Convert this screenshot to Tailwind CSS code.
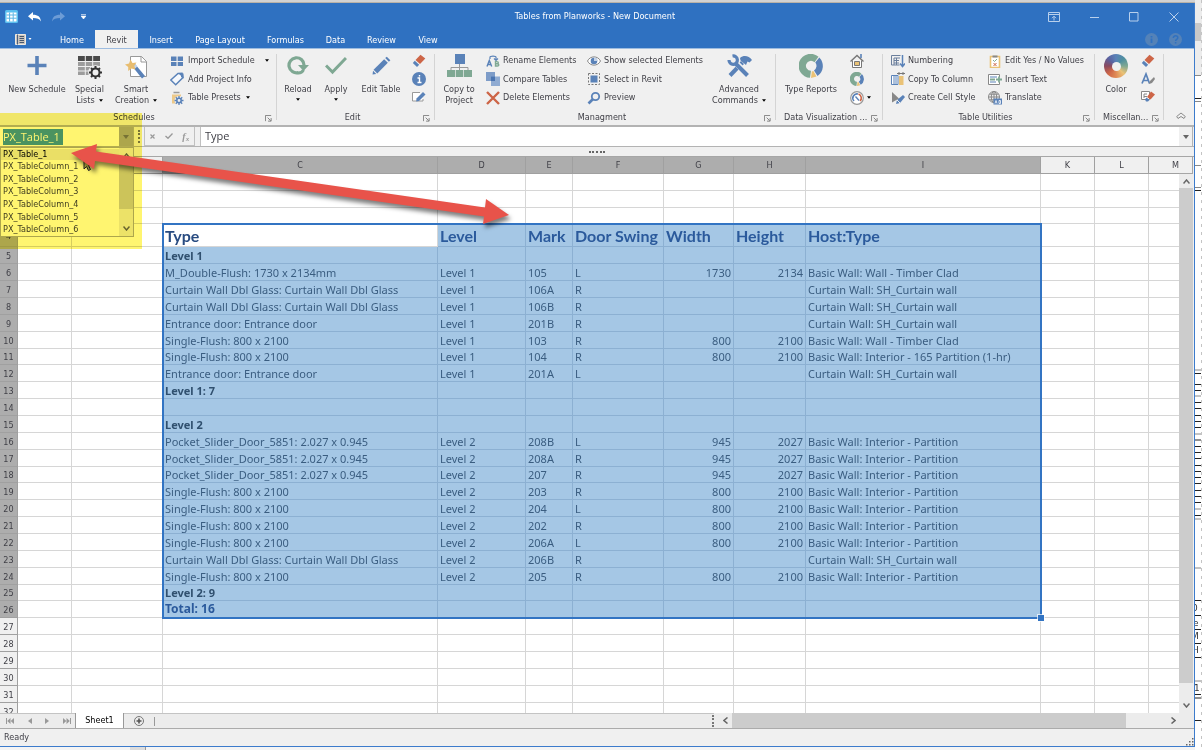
<!DOCTYPE html>
<html lang="en">
<head>
  <meta charset="utf-8">
  <meta name="viewport" content="width=device-width, initial-scale=1">
  <title>Tables from Planworks - New Document</title>
  <script src="https://cdn.jsdelivr.net/npm/@tailwindcss/browser@4"></script>
</head>
<body class="h-screen overflow-hidden bg-white font-['DejaVu_Sans_Condensed','DejaVu_Sans',sans-serif] text-[9px] leading-[11px] text-[#3f3f46]">

<!-- shared icons -->
<svg class="hidden">
  <symbol id="launcher" viewBox="0 0 8 8"><path d="M.5 7V.5H7" fill="none" stroke="#777"/><path d="M3 3l3.5 3.5M7 3.5V7H3.5" fill="none" stroke="#777"/></symbol>
  <symbol id="down" viewBox="0 0 6 4"><path d="M0 0h6L3 4z" fill="currentColor"/></symbol>
  <symbol id="eraser" viewBox="0 0 14 14"><path d="M8.500 .8 13.300 4.500 8 10 3.500 6z" fill="#cd6547"/><path d="M2.800 6.800 7.200 10.700 5 13 .8 9z" fill="#5a82b8"/></symbol>
  <symbol id="donut" viewBox="0 0 24 24">
    <path d="M11 23.800A12 12 0 1 1 19.500 2.800L15.500 8.300A5 5 0 1 0 12 16.800z" fill="#7fa893"/>
    <path d="M20.300 3.500A12 12 0 0 1 18.500 22L15 16.500A5.500 5.500 0 0 0 16.300 8.500z" fill="#5a82b8"/>
    <path d="M12.800 17.500 14.400 17 17.500 22.500 12 24z" fill="#eac276"/>
  </symbol>
  <symbol id="pencil" viewBox="0 0 18 18"><path d="M1.500 13 11.500 3 15 6.500 5 16.500z" fill="#5a82b8"/><path d="M12.500 2 14 .7 17.400 4 16 5.500z" fill="#5a82b8"/><path d="M1 14l3 3-3.500.6z" fill="#5a82b8"/></symbol>
</svg>

<div class="flex h-full">
  <div class="flex min-w-0 flex-1 flex-col">
    <div class="h-[3px] shrink-0 border-b border-[#b9b2a8] bg-[#d2d2d2]"></div>

    <main class="relative flex min-h-0 flex-1 flex-col border-r border-b border-[#3c7bcc] bg-[#f0f0f0]">

      <!-- title bar -->
      <header class="bg-[#2f71c1] text-white">
        <div class="relative flex h-[27px] items-center">
          <svg class="ml-[5px] size-[13px]" viewBox="0 0 13 13"><rect width="13" height="13" rx="1.500" fill="#5bc0f0"/><path d="M1.500 2.500h10v9h-10z" fill="#fff"/><path d="M1.500 5h10M1.500 8.200h10M4.600 2.500v9M8.200 2.500v9" stroke="#5bb4e4"/></svg>
          <button class="ml-[10px]" aria-label="Undo"><svg class="h-[10px] w-[13px]" viewBox="0 0 13 10"><path d="M0 4.200 5 0v2.700c5 0 7.500 2 8 6.800-1.500-2.700-4-3.500-8-3.500v2.500z" fill="#fff"/></svg></button>
          <button class="ml-[11px]" aria-label="Redo"><svg class="h-[10px] w-[13px]" viewBox="0 0 13 10"><path d="M13 4.200 8 0v2.700C3 2.700.5 4.700 0 9.500 1.500 6.800 4 6 8 6v2.500z" fill="#6d9cd6"/></svg></button>
          <button class="ml-[16px]" aria-label="Customize"><svg class="h-[5px] w-[5px]" viewBox="0 0 5 5"><path d="M0 .5h5M0 2h5L2.500 5z" stroke="#fff" stroke-width=".6" fill="#fff"/></svg></button>
          <h1 class="pointer-events-none absolute inset-x-0 pr-1 text-center">Tables from Planworks - New Document</h1>
          <div class="mr-[15px] ml-auto flex items-center gap-[30px]">
            <button aria-label="Ribbon options"><svg class="h-[10px] w-[12px]" viewBox="0 0 12 10"><path d="M.5.5h11v9H.5zM.5 2.500h11M6 8.500v-4M4 6.200l2-2 2 2" fill="none" stroke="#b9d0ec"/></svg></button>
            <button aria-label="Minimize"><svg class="h-[10px] w-[9px]" viewBox="0 0 9 10"><path d="M0 5.500h9" stroke="#b9d0ec"/></svg></button>
            <button aria-label="Maximize"><svg class="size-[10px]" viewBox="0 0 10 10"><path d="M.5.500h8.500v8.500H.500z" fill="none" stroke="#b9d0ec"/></svg></button>
            <button aria-label="Close"><svg class="size-[10px]" viewBox="0 0 10 10"><path d="M.5.500l9 9M9.500.500l-9 9" stroke="#b9d0ec"/></svg></button>
          </div>
        </div>
        <nav class="flex h-[18px] items-stretch">
          <button class="ml-[15px] flex w-[34px] items-center gap-[2px]" aria-label="File">
            <svg class="h-[11px] w-[11px]" viewBox="0 0 11 11"><path d="M.5.5h10v10H.5z" fill="#c9c4bd" stroke="#efe9e0"/><path d="M2.500.5v10" stroke="#4a5f80"/><path d="M4.500 2.500H9M4.500 4.500H9M4.500 6.500H9M4.500 8.500H9" stroke="#46566e"/></svg>
            <svg class="h-[2px] w-[4px]"><use href="#down"/></svg>
          </button>
          <button class="w-[46px] pt-[2px]">Home</button>
          <button class="w-[43px] bg-[#f0f0f0] pt-[2px] text-[#3f3f46]">Revit</button>
          <button class="w-[46px] pt-[2px]">Insert</button>
          <button class="w-[72px] pt-[2px]">Page Layout</button>
          <button class="w-[59px] pt-[2px]">Formulas</button>
          <button class="w-[41px] pt-[2px]">Data</button>
          <button class="w-[51px] pt-[2px]">Review</button>
          <button class="w-[42px] pt-[2px]">View</button>
          <div class="mr-[12px] ml-auto flex items-center gap-[11px]">
            <svg class="size-[13px]" viewBox="0 0 13 13"><circle cx="6.500" cy="6.500" r="6.500" fill="#5482b8"/><path d="M6.500 5.500v4.500M6.500 3v1.500" stroke="#2f71c1" stroke-width="1.800"/></svg>
            <svg class="size-[13px]" viewBox="0 0 13 13"><circle cx="6.500" cy="6.500" r="6.500" fill="#5482b8"/><path d="M4.300 5c0-3 4.500-2.700 4.500-.2 0 1.500-2.200 1.500-2.200 3.200M6.600 9v1.500" fill="none" stroke="#2f71c1" stroke-width="1.500"/></svg>
          </div>
        </nav>
      </header>

      <!-- ribbon -->
      <section class="flex h-[77px] shrink-0 border-t border-[#9dbce0]">

        <div class="flex w-[276px] shrink-0 flex-col">
          <div class="flex h-[63px] pt-[2px]">
            <button class="ml-1 flex w-[66px] flex-col items-center">
              <svg class="mb-[4px] h-[29px] w-[20px]" viewBox="0 0 20 29"><path d="M10 5v19M.5 14.500h19" stroke="#5a82b8" stroke-width="3.600"/></svg>New Schedule
            </button>
            <button class="flex w-[39px] flex-col items-center">
              <svg class="mb-[4px] h-[29px] w-[25px]" viewBox="0 0 25 29">
                <path d="M1 5h22v5H1z" fill="#4a4a4a"/><path d="M1 11h22v13H1z" fill="#9c9c9c"/><path d="M1 15.500h22M1 20h22M8.300 5v20M15.700 5v20" stroke="#f0f0f0"/>
                <circle cx="18.500" cy="21.500" r="7.300" fill="#f0f0f0"/><circle cx="18.500" cy="21.500" r="4" fill="none" stroke="#333" stroke-width="2"/>
                <path d="M18.500 15v2.500M18.500 25.500V28M12 21.500h2.500M22.500 21.500H25M14 17l1.700 1.700M21.300 24.300 23 26M23 17l-1.700 1.700M15.700 24.300 14 26" stroke="#333" stroke-width="2"/>
              </svg>Special<span class="flex items-center gap-[4px]">Lists <svg class="h-[3px] w-[4px] text-black"><use href="#down"/></svg></span>
            </button>
            <button class="flex w-[54px] flex-col items-center">
              <svg class="mb-[4px] h-[29px] w-[23px]" viewBox="0 0 23 29">
                <path d="M5.500 5.500h11l5 5v15h-16z" fill="#fff" stroke="#999"/><path d="M16 5.500V11h5.500" fill="none" stroke="#999"/>
                <path d="M7 15l3-2 10 12-3 2.500z" fill="#5a82b8"/><path d="M7.500 15.500l2.800-2 2 2.300-2.800 2z" fill="#c8d6e8"/>
                <path d="M5.500 8.500 7.500 12l4-.5-2.300 3.300L10.500 18.500 6.500 17.500 3.200 20V16L0 13.500l4-1z" fill="#e8bd70"/>
              </svg>Smart<span class="flex items-center gap-[4px]">Creation <svg class="h-[3px] w-[4px] text-black"><use href="#down"/></svg></span>
            </button>
            <div class="ml-[7px] flex flex-col">
              <button class="flex h-[19px] items-center gap-1"><svg class="size-[14px]" viewBox="0 0 14 14"><path d="M1 2.500h5.500V7H1zM7.700 2.500H13V7H7.700zM1 8h5.500v4H1zM7.700 8H13v4H7.700z" fill="#5a82b8"/></svg>Import Schedule <svg class="ml-[6px] h-[3px] w-[4px] text-black"><use href="#down"/></svg></button>
              <button class="flex h-[18px] items-center gap-1"><svg class="size-[14px]" viewBox="0 0 14 14"><path d="M8 1.500 12 1.200 13 5.500 5.700 12.800.800 8z" fill="#f5f8fc" stroke="#5a82b8" stroke-width="1.500"/><path d="M9 1.500h4.500v5L11 5z" fill="#5a82b8"/><circle cx="10" cy="4.200" r="1" fill="#fff"/></svg>Add Project Info</button>
              <button class="flex h-[19px] items-center gap-1"><svg class="size-[14px]" viewBox="0 0 14 14"><path d="M3.500 1.500h6" stroke="#999" stroke-width="1.500"/><path d="M2 3.500h9v9H2z" fill="#ecc98a"/><circle cx="9" cy="9.500" r="4.500" fill="#f0f0f0"/><circle cx="9" cy="9.500" r="2.200" fill="none" stroke="#5a82b8" stroke-width="1.600"/><path d="M9 5v2M9 12v2M4.500 9.500h2M11.500 9.500h2M5.800 6.300l1.400 1.400M10.800 11.300l1.400 1.400M12.200 6.300l-1.400 1.400M7.200 11.300l-1.400 1.400" stroke="#5a82b8" stroke-width="1.300"/></svg>Table Presets <svg class="ml-[1px] h-[3px] w-[4px] text-black"><use href="#down"/></svg></button>
            </div>
          </div>
          <div class="relative pr-[8px] text-center">Schedules<button class="absolute top-[3px] right-[4px]" aria-label="Schedules options"><svg class="size-[7px]"><use href="#launcher"/></svg></button></div>
        </div>
        <div class="my-[5px] w-px shrink-0 bg-[#d4d4d4]"></div>

        <div class="flex w-[157px] shrink-0 flex-col">
          <div class="flex h-[63px] pt-[2px]">
            <button class="ml-[2px] flex w-[38px] flex-col items-center">
              <svg class="mb-[4px] h-[29px] w-[22px]" viewBox="0 0 22 29"><path d="M11.500 21.500A7.500 7.500 0 1 1 17 14" fill="none" stroke="#7fa893" stroke-width="3.200"/><path d="M10 21.800c3 .4 5.500-1 6.500-3" fill="none" stroke="#7fa893" stroke-width="3"/><path d="M11 14h11l-5.500 6z" fill="#7fa893"/></svg>Reload<svg class="mt-[3px] h-[3px] w-[4px] text-black"><use href="#down"/></svg>
            </button>
            <button class="flex w-[38px] flex-col items-center">
              <svg class="mb-[4px] h-[29px] w-[22px]" viewBox="0 0 22 29"><path d="M1 14.500 7.500 21 21 7" fill="none" stroke="#7fa893" stroke-width="3"/></svg>Apply<svg class="mt-[3px] h-[3px] w-[4px] text-black"><use href="#down"/></svg>
            </button>
            <button class="flex w-[52px] flex-col items-center">
              <svg class="mt-[5px] mb-[9px] h-[19px] w-[19px]"><use href="#pencil"/></svg>Edit Table
            </button>
            <div class="ml-[5px] flex flex-col">
              <button class="flex h-[19px] items-center" aria-label="Clear"><svg class="size-[14px]"><use href="#eraser"/></svg></button>
              <button class="flex h-[18px] items-center" aria-label="Info"><svg class="size-[14px]" viewBox="0 0 14 14"><circle cx="7" cy="7" r="7" fill="#5a82b8"/><path d="M5.500 6H7.500v4.500M5.500 10.500h4M7.500 3v1.600" fill="none" stroke="#fff" stroke-width="1.400"/></svg></button>
              <button class="flex h-[18px] items-center" aria-label="Edit"><svg class="size-[14px]" viewBox="0 0 14 14"><path d="M8 2.500H.500v8.500H11V9" fill="#fff" stroke="#999"/><path d="M4.500 8.500 11 2l2.500 2.500-6.500 6.500-2.800.5z" fill="#5a82b8"/></svg></button>
            </div>
          </div>
          <div class="relative pr-[6px] text-center">Edit<button class="absolute top-[3px] right-[4px]" aria-label="Edit options"><svg class="size-[7px]"><use href="#launcher"/></svg></button></div>
        </div>
        <div class="my-[5px] w-px shrink-0 bg-[#d4d4d4]"></div>

        <div class="flex w-[340px] shrink-0 flex-col">
          <div class="flex h-[63px] pt-[2px]">
            <button class="ml-[1px] flex w-[46px] flex-col items-center">
              <svg class="mb-[4px] h-[29px] w-[25px]" viewBox="0 0 25 29"><path d="M12.500 13v4M4 20v-3.500h17V20M12.500 16v4" fill="none" stroke="#999"/><path d="M8 3h10v10H8z" fill="#5a82b8"/><path d="M0 19h8v7H0zM8.700 19h7.600v7H8.700zM17 19h8v7h-8z" fill="#7fa893"/></svg>Copy to<span>Project</span>
            </button>
            <div class="ml-[4px] flex w-[101px] flex-col">
              <button class="flex h-[19px] items-center gap-[3px] whitespace-nowrap"><svg class="size-[14px]" viewBox="0 0 14 14"><path d="M4 5V3c0-1.300 6-1.300 6 0v3M8 4.500l2 2 2-2" fill="none" stroke="#5a82b8" stroke-width="1.200"/><path d="M1 12.500 3.300 6.500 5.700 12.500M1.700 10.500H5" fill="none" stroke="#5a82b8" stroke-width="1.400"/><path d="M9.500 7.500V12h1.800c2 0 2-2.200 0-2.200H9.500h1.600c1.600 0 1.600-2.200 0-2.200z" fill="none" stroke="#7fa893" stroke-width="1.400"/></svg>Rename Elements</button>
              <button class="flex h-[18px] items-center gap-[3px] whitespace-nowrap"><svg class="size-[14px]" viewBox="0 0 14 14"><path d="M0 0h9v9H0z" fill="#7d9cc8"/><path d="M5 4.500h9V14H5z" fill="#8fabd2"/><path d="M5 4.500h4V9H5z" fill="#4a74b0"/></svg>Compare Tables</button>
              <button class="flex h-[19px] items-center gap-[3px] whitespace-nowrap"><svg class="size-[14px]" viewBox="0 0 14 14"><path d="M1 1l12 12M13 1 1 13" stroke="#cd6547" stroke-width="2.400"/></svg>Delete Elements</button>
            </div>
            <div class="flex flex-col">
              <button class="flex h-[19px] items-center gap-[3px] whitespace-nowrap"><svg class="size-[14px]" viewBox="0 0 14 14"><path d="M.5 7C3 1.500 11 1.500 13.500 7 11 12.500 3 12.500.5 7z" fill="#fff" stroke="#888"/><circle cx="7" cy="7" r="3.300" fill="#5a82b8"/><path d="M7 7V3.500A3.500 3.500 0 0 1 10.500 7z" fill="#c4d2e6"/></svg>Show selected Elements</button>
              <button class="flex h-[18px] items-center gap-[3px] whitespace-nowrap"><svg class="size-[14px]" viewBox="0 0 14 14"><path d="M1.500 1.500h11v11h-11z" fill="none" stroke="#777" stroke-dasharray="2 1.500"/><path d="M3.500 3.500h7v7h-7z" fill="#5a82b8"/></svg>Select in Revit</button>
              <button class="flex h-[19px] items-center gap-[3px] whitespace-nowrap"><svg class="size-[14px]" viewBox="0 0 14 14"><circle cx="8.500" cy="5.500" r="3.700" fill="none" stroke="#5a82b8" stroke-width="1.800"/><path d="M6 8 1.500 12.500" stroke="#5a82b8" stroke-width="2.600"/></svg>Preview</button>
            </div>
            <button class="mr-[8px] ml-auto flex w-[56px] flex-col items-center">
              <svg class="mb-[4px] h-[29px] w-[25px]" viewBox="0 0 25 29">
                <path d="M3 24.500 15.500 11.500" stroke="#5a82b8" stroke-width="4"/><path d="M13 7c4-3.500 9-2 12 2l-2.500 2.500-2-1L19 14l-5.500-4.500z" fill="#5a82b8"/>
                <path d="M10 13l11 11" stroke="#f0f0f0" stroke-width="6"/><path d="M8 12 20.500 24.500" stroke="#5a82b8" stroke-width="4"/>
                <path d="M5.500 5A4.200 4.200 0 1 1 2 9" fill="none" stroke="#5a82b8" stroke-width="3.200"/>
              </svg>Advanced<span class="flex items-center gap-[4px]">Commands <svg class="h-[3px] w-[4px] text-black"><use href="#down"/></svg></span>
            </button>
          </div>
          <div class="relative pr-[6px] text-center">Managment<button class="absolute top-[3px] right-[4px]" aria-label="Managment options"><svg class="size-[7px]"><use href="#launcher"/></svg></button></div>
        </div>
        <div class="my-[5px] w-px shrink-0 bg-[#d4d4d4]"></div>

        <div class="flex w-[106px] shrink-0 flex-col">
          <div class="flex h-[63px] pt-[2px]">
            <button class="ml-[2px] flex w-[66px] flex-col items-center"><svg class="mt-[3px] mb-[6px] size-[24px]"><use href="#donut"/></svg>Type Reports</button>
            <div class="ml-[6px] flex flex-col">
              <button class="flex h-[19px] items-center" aria-label="Home report"><svg class="size-[14px]" viewBox="0 0 14 14"><path d="M2.500 6.500v7h9v-7" fill="#fff" stroke="#777"/><path d="M.5 7.500 7 1.500l6.500 6" fill="none" stroke="#777" stroke-width="1.400"/><path d="M11 0v4" stroke="#5a82b8" stroke-width="1.600"/><path d="M4.500 7.500h5v4h-5z" fill="#eac276" stroke="#777"/></svg></button>
              <button class="flex h-[18px] items-center" aria-label="Chart report"><svg class="size-[14px]"><use href="#donut"/></svg></button>
              <button class="flex h-[19px] items-center gap-[3px]" aria-label="Gauge"><svg class="size-[14px]" viewBox="0 0 14 14"><circle cx="7" cy="7" r="6.300" fill="#fff" stroke="#999" stroke-width="1.200"/><path d="M4 10A4.200 4.200 0 0 1 8 3" fill="none" stroke="#5a82b8" stroke-width="1.600"/><path d="M8.500 3A4.200 4.200 0 0 1 10 10" fill="none" stroke="#cd6547" stroke-width="1.600"/><path d="M5.500 5.500l3.500 4" stroke="#5a82b8" stroke-width="1.300"/></svg><svg class="h-[3px] w-[4px] text-black"><use href="#down"/></svg></button>
            </div>
          </div>
          <div class="relative pl-[8px]">Data Visualization ...<button class="absolute top-[3px] right-[4px]" aria-label="Visualization options"><svg class="size-[7px]"><use href="#launcher"/></svg></button></div>
        </div>
        <div class="my-[5px] w-px shrink-0 bg-[#d4d4d4]"></div>

        <div class="flex w-[211px] shrink-0 flex-col">
          <div class="flex h-[63px] pt-[2px]">
            <div class="ml-[8px] flex w-[97px] flex-col">
              <button class="flex h-[19px] items-center gap-[3px] whitespace-nowrap"><svg class="size-[14px]" viewBox="0 0 14 14"><path d="M.5 1.500h9M.5 1.500v9.500h8M3 4h6M3 4v7M5.500 4v7M3 6.500h5M3 9h5" fill="none" stroke="#6b7f9c"/><path d="M11.500 1v11M9 9.500l2.500 3 2.500-3" fill="none" stroke="#5a82b8" stroke-width="1.500"/></svg>Numbering</button>
              <button class="flex h-[18px] items-center gap-[3px] whitespace-nowrap"><svg class="size-[14px]" viewBox="0 0 14 14"><path d="M.5 3.500H7v9H.5zM3 3.500v9M5 3.500v9" fill="#fff" stroke="#5a82b8"/><path d="M8 4h4.500v9H8z" fill="#eac276"/><path d="M6 1.500h8M8 0v3M12 0v3" stroke="#777"/></svg>Copy To Column</button>
              <button class="flex h-[19px] items-center gap-[3px] whitespace-nowrap"><svg class="size-[14px]" viewBox="0 0 14 14"><path d="M1 1l7 6.500-7 4z" fill="#888"/><path d="M5 13l1-4 6-5 2 2-5 6z" fill="#5a82b8"/><path d="M6 9l3 3" stroke="#f0f0f0"/></svg>Create Cell Style</button>
            </div>
            <div class="flex flex-col">
              <button class="flex h-[19px] items-center gap-[3px] whitespace-nowrap"><svg class="size-[14px]" viewBox="0 0 14 14"><path d="M2.500 2.500h9v11h-9z" fill="#fff" stroke="#eac276" stroke-width="1.600"/><path d="M4.500 1.500h5v2h-5z" fill="#888"/><path d="M5 6l1.500 1.500L9 5" fill="none" stroke="#7fa893"/><path d="M5.500 9l3 3M8.500 9l-3 3" stroke="#cd6547"/></svg>Edit Yes / No Values</button>
              <button class="flex h-[18px] items-center gap-[3px] whitespace-nowrap"><svg class="size-[14px]" viewBox="0 0 14 14"><path d="M11.500 5V2.500h-11v10h11V10" fill="#fff" stroke="#888"/><path d="M2 5h7M2 10h6" stroke="#5a82b8" stroke-width="1.200"/><path d="M2 7.500h5M8 7.500h6M11 4.500v6" stroke="#7fa893" stroke-width="1.800"/></svg>Insert Text</button>
              <button class="flex h-[19px] items-center gap-[3px] whitespace-nowrap"><svg class="size-[14px]" viewBox="0 0 14 14"><circle cx="6" cy="6" r="5.500" fill="none" stroke="#888"/><path d="M.5 6h11M6 .5v11M1.500 3.200h9M1.500 8.800h9" stroke="#888"/><ellipse cx="6" cy="6" rx="2.700" ry="5.500" fill="none" stroke="#888"/><path d="M5.500 7.500H14V13.500H5.500z" fill="#5a82b8"/><path d="M7 12.500l1-3 1 3M11 9.500v3h1.500v-3z" fill="none" stroke="#fff" stroke-width=".8"/></svg>Translate</button>
            </div>
          </div>
          <div class="relative pr-[6px] text-center">Table Utilities<button class="absolute top-[3px] right-[4px]" aria-label="Utilities options"><svg class="size-[7px]"><use href="#launcher"/></svg></button></div>
        </div>
        <div class="my-[5px] w-px shrink-0 bg-[#d4d4d4]"></div>

        <div class="flex w-[68px] shrink-0 flex-col">
          <div class="flex h-[63px] pt-[2px]">
            <button class="flex w-[42px] flex-col items-center">
              <span class="mt-[3px] mb-[6px] flex size-[24px] items-center justify-center rounded-full bg-[conic-gradient(#5a82b8,#4f8fa0,#7fa893,#eac276,#e08a55,#cd6547,#8a4a60,#5a62a0,#5a82b8)]"><span class="size-[9px] rounded-full bg-[#f0f0f0]"></span></span>Color
            </button>
            <div class="ml-[4px] flex flex-col">
              <button class="flex h-[19px] items-center" aria-label="Erase"><svg class="size-[14px]"><use href="#eraser"/></svg></button>
              <button class="flex h-[18px] items-center" aria-label="Font"><svg class="size-[14px]" viewBox="0 0 14 14"><path d="M1 11.500 5 2l3.500 9.500M2.500 8.500h5" fill="none" stroke="#5a82b8" stroke-width="1.700"/><path d="M8 12l1-3 4-4 1 2-3 4z" fill="#888"/></svg></button>
              <button class="flex h-[18px] items-center" aria-label="Clear cells"><svg class="size-[14px]" viewBox="0 0 14 14"><path d="M.5 1.500h8v8h-8zM3 4h3M3 6.500h3M3 4v4" fill="#fff" stroke="#888"/><path d="M10 1.500 14 4.500 9.500 9.500 6 7z" fill="#cd6547"/><path d="M5.500 7.500 8.500 10 7 11.500H5L4 9.500z" fill="#5a82b8"/></svg></button>
            </div>
          </div>
          <div class="relative pl-[8px] whitespace-nowrap">Miscellan...<button class="absolute top-[3px] right-[4px]" aria-label="Miscellaneous options"><svg class="size-[7px]"><use href="#launcher"/></svg></button></div>
        </div>
        <div class="my-[5px] w-px shrink-0 bg-[#d4d4d4]"></div>
        <button class="mr-[8px] mb-[5px] ml-auto self-end" aria-label="Collapse the ribbon"><svg class="h-[8px] w-[10px]" viewBox="0 0 10 8"><path d="M.700 4.500 5 1l4.300 3.500L8 6.500 5 4.500 2 6.500z" fill="none" stroke="#8a8a8a"/></svg></button>
      </section>

      <!-- formula bar -->
      <section class="flex h-[22px] shrink-0 items-stretch border-t-2 border-b border-[#b3b3b3]">
        <div class="flex w-[134px] shrink-0 items-center border-r border-[#b3b3b3] bg-white">
          <div class="flex-1 pl-[3px]"><input class="block h-[16px] w-[60px] bg-[#4b99da] font-['Open_Sans',sans-serif] text-[11px] text-white" aria-label="Name box" value="PX_Table_1"></div>
          <button class="flex h-full w-[14px] items-center justify-center bg-[#adadad]" aria-label="Show names"><svg class="h-[4px] w-[6px] text-[#777]"><use href="#down"/></svg></button>
        </div>
        <div class="mx-[4px] my-[3px] w-[2px] shrink-0 border-l-2 border-dotted border-[#777]"></div>
        <div class="flex w-[51px] shrink-0 items-center justify-around border border-t-0 border-[#c0c0c0] text-[#999]">
          <button aria-label="Cancel"><svg class="size-[5px]" viewBox="0 0 5 5"><path d="M.5.5l4 4M4.500.5l-4 4" stroke="#999" stroke-width="1.200"/></svg></button>
          <button aria-label="Enter"><svg class="h-[6px] w-[8px]" viewBox="0 0 8 6"><path d="M.5 3 3 5.300 7.500.5" fill="none" stroke="#999" stroke-width="1.300"/></svg></button>
          <button class="font-['Liberation_Serif',serif] text-[10px] font-bold italic" aria-label="Insert function">f<sub class="text-[7px]">x</sub></button>
        </div>
        <input class="ml-[5px] min-w-0 flex-1 border-l border-[#c0c0c0] bg-white pb-[2px] pl-[4px] font-['Open_Sans',sans-serif] text-[11px]" aria-label="Formula" value="Type">
        <button class="mr-px flex w-[14px] items-center justify-center border-r border-[#b3b3b3]" aria-label="Expand formula bar"><svg class="h-[4px] w-[6px] text-[#666]"><use href="#down"/></svg></button>
      </section>
      <div class="flex h-[9px] shrink-0 items-center justify-center"><span class="w-[16px] border-t-2 border-dotted border-[#666]"></span></div>

      <!-- sheet -->
      <section class="flex min-h-0 flex-1 border-t border-[#a6a6a6]">
        <div class="relative min-w-0 flex-1 overflow-hidden bg-white">
          <table class="w-[1203px] table-fixed border-separate border-spacing-0">
            <colgroup>
              <col class="w-[18px]"><col class="w-[54px]"><col class="w-[91px]"><col class="w-[275px]"><col class="w-[88px]"><col class="w-[47px]"><col class="w-[91px]"><col class="w-[70px]"><col class="w-[72px]"><col class="w-[235px]"><col class="w-[54px]"><col class="w-[54px]"><col class="w-[54px]">
            </colgroup>
            <thead><tr id="letters"></tr></thead>
            <tbody id="rows"></tbody>
          </table>
          <div class="pointer-events-none absolute top-[66px] left-[162px] h-[396px] w-[880px] border-2 border-[#3274c3]">
            <span class="absolute -right-[4px] -bottom-[4px] size-[6px] bg-[#3274c3] outline outline-white/70"></span>
          </div>
        </div>
        <div class="mr-px flex w-[14px] shrink-0 flex-col bg-[#ececec]">
          <div class="h-[17px] border-r border-b border-[#a6a6a6] bg-[#f0f0f0]"></div>
          <button class="flex h-[14px] items-center justify-center" aria-label="Scroll up"><svg class="h-[5px] w-[7px]" viewBox="0 0 7 5"><path d="M.5 4.500l3-3.500 3 3.500" fill="none" stroke="#666" stroke-width="1.500"/></svg></button>
          <div class="flex-1 bg-[#cccccc]"></div>
          <button class="flex h-[30px] items-end justify-center pb-[5px]" aria-label="Scroll down"><svg class="h-[5px] w-[7px]" viewBox="0 0 7 5"><path d="M.5.5l3 3.500 3-3.500" fill="none" stroke="#666" stroke-width="1.500"/></svg></button>
        </div>
      </section>

      <!-- sheet tabs and horizontal scroll -->
      <section class="flex h-[16px] shrink-0 items-stretch border-b border-[#ababab] bg-[#ececec]">
        <div class="flex w-[75px] shrink-0 items-center justify-between border-t border-[#c4c4c4] pr-[4px] pl-[6px]">
          <button aria-label="First sheet"><svg class="h-[6px] w-[8px]" viewBox="0 0 8 6"><path d="M0 0h1v6H0zM4.500 0v6L1.200 3zM8 0v6L4.700 3z" fill="#999"/></svg></button>
          <button aria-label="Previous sheet"><svg class="h-[6px] w-[4px]" viewBox="0 0 4 6"><path d="M4 0v6L0 3z" fill="#999"/></svg></button>
          <button aria-label="Next sheet"><svg class="h-[6px] w-[4px]" viewBox="0 0 4 6"><path d="M0 0v6l4-3z" fill="#999"/></svg></button>
          <button aria-label="Last sheet"><svg class="h-[6px] w-[8px]" viewBox="0 0 8 6"><path d="M8 0H7v6h1zM3.500 0v6l3.300-3zM0 0v6l3.300-3z" fill="#999"/></svg></button>
        </div>
        <button class="w-[49px] border-x border-[#999] bg-white text-black">Sheet1</button>
        <div class="flex flex-1 items-center border-t border-[#c4c4c4]">
          <button class="ml-[10px]" aria-label="Add sheet"><svg class="size-[10px]" viewBox="0 0 10 10"><circle cx="5" cy="5" r="4.500" fill="none" stroke="#777"/><path d="M5 2.500v5M2.500 5h5" stroke="#555" stroke-width="1.600"/></svg></button>
          <span class="ml-[10px] h-[9px] w-px bg-[#999]"></span>
          <span class="ml-auto h-[12px] border-l-2 border-dotted border-[#777]"></span>
        </div>
        <div class="ml-[4px] flex w-[476px] shrink-0 items-stretch">
          <button class="flex w-[14px] items-center justify-center" aria-label="Scroll left"><svg class="h-[7px] w-[5px]" viewBox="0 0 5 7"><path d="M4.500.5 1 3.500l3.500 3" fill="none" stroke="#666" stroke-width="1.500"/></svg></button>
          <div class="flex-1 bg-[#cccccc]"></div>
          <button class="flex w-[68px] items-center justify-end pr-[18px]" aria-label="Scroll right"><svg class="h-[7px] w-[5px]" viewBox="0 0 5 7"><path d="M.5.5 4 3.500l-3.500 3" fill="none" stroke="#666" stroke-width="1.500"/></svg></button>
        </div>
      </section>

      <footer class="flex h-[17px] shrink-0 items-center justify-between pl-[4px]">
        <span>Ready</span>
        <svg class="size-[8px] self-end" viewBox="0 0 8 8"><path d="M6 0h1.500v1.500H6zM6 3h1.500v1.500H6zM3 3h1.500v1.500H3zM6 6h1.500v1.500H6zM3 6h1.500v1.500H3zM0 6h1.500v1.500H0z" fill="#666"/></svg>
      </footer>

      <!-- open list of names -->
      <div class="absolute top-[144px] left-0 flex h-[90px] w-[134px] border border-[#adadad] bg-white">
        <ul class="grid flex-1 grid-rows-7 items-center">
          <li class="bg-[#eae9e9] pl-[2px] text-black">PX_Table_1</li>
          <li class="pl-[2px]">PX_TableColumn_1</li>
          <li class="pl-[2px]">PX_TableColumn_2</li>
          <li class="pl-[2px]">PX_TableColumn_3</li>
          <li class="pl-[2px]">PX_TableColumn_4</li>
          <li class="pl-[2px]">PX_TableColumn_5</li>
          <li class="pl-[2px]">PX_TableColumn_6</li>
        </ul>
        <div class="flex w-[14px] flex-col items-center bg-[#ececec]">
          <svg class="my-[5px] h-[5px] w-[7px]" viewBox="0 0 7 5"><path d="M.5 4.500l3-3.500 3 3.500" fill="none" stroke="#666" stroke-width="1.500"/></svg>
          <div class="h-[46px] w-full bg-[#cccccc]"></div>
          <svg class="mt-auto mb-[5px] h-[5px] w-[7px]" viewBox="0 0 7 5"><path d="M.5.5l3 3.500 3-3.500" fill="none" stroke="#666" stroke-width="1.500"/></svg>
        </div>
      </div>

      <!-- highlighter and arrow -->
      <div class="pointer-events-none absolute top-[110px] left-0 h-[136px] w-[142px] bg-[#fff570] mix-blend-multiply"></div>
      <svg class="pointer-events-none absolute top-[137px] left-[66px] h-[96px] w-[460px]" viewBox="66 140 460 96">
        <path d="M84 158v11l2.500-2.500 2 4 2-1-2-4h3.500z" fill="#bdb53f" stroke="#222"/>
        <path class="drop-shadow-[2px_4px_2px_rgba(0,0,0,0.5)]" d="M71 153 97 144 96 151.500 485 207.500 486 199 509 215 483 224 484 216.500 95 161 94 169z" fill="#e8534a"/>
      </svg>
    </main>

    <div class="flex h-[3px] shrink-0 bg-[#f4f4f4]"><span class="ml-[130px] h-full w-[16px] border-r border-[#999] bg-[#dcdcdc]"></span></div>
  </div>

  <!-- strip of the drawing sheet behind the window -->
  <svg class="h-[750px] w-[7px] shrink-0" viewBox="0 0 7 750">
    <path d="M0 0h7v75H0z" fill="#ececec"/><path d="M0 23h6v18H0z" fill="#c8c8c8"/>
    <path d="M6.500 0v750" stroke="#c4c4c4" stroke-dasharray="3 5"/>
    <path d="M0 75.500h6M0 101.500h6M0 165.500h6M0 187.500h6M0 370h6M0 396h6M0 434h6M0 509h6M0 519h6M0 568h6M0 681h6" stroke="#888"/>
    <path d="M0 98.500h6M0 190.500h6M0 373.500h6M0 384.500h6M0 390.500h6M0 402.500h6M0 408.500h6M0 415.500h6M0 421.500h6M0 427.500h6M0 440h6M0 446.500h6M0 452.500h6M0 458.500h6M0 465.500h6M0 471.500h6M0 477.500h6M0 483.500h6M0 490.500h6M0 496.500h6M0 502.500h6M0 515.500h6M0 600.500h6M0 615.500h6M0 629.500h6M0 643.500h6M0 657.500h6M0 694.500h6M0 698h6M0 720.500h6" stroke="#222"/>
    <g font-family="DejaVu Sans" font-size="9" fill="#333"><text x="-3" y="611">0</text><text x="-2" y="626">e</text><text x="-4" y="639">M</text><text x="-3" y="653">H</text><text x="-1" y="691">1</text></g>
  </svg>
</div>

<script>
  // the first two letters and the first three numbers lie under the open list
  const letters = ['', '', '', 'C', 'D', 'E', 'F', 'G', 'H', 'I', 'K', 'L', 'M'];
  const timber = 'Basic Wall: Wall - Timber Clad';
  const curtain = 'Curtain Wall: SH_Curtain wall';
  const partition = 'Basic Wall: Interior - Partition';
  const glass = 'Curtain Wall Dbl Glass: Curtain Wall Dbl Glass';
  const pocket = 'Pocket_Slider_Door_5851: 2.027 x 0.945';
  const flush = 'Single-Flush: 800 x 2100';
  const entrance = 'Entrance door: Entrance door';

  // columns C to I, by row number
  const data = {
    4: ['Type', 'Level', 'Mark', 'Door Swing', 'Width', 'Height', 'Host:Type'],
    5: ['Level 1'],
    6: ['M_Double-Flush: 1730 x 2134mm', 'Level 1', '105', 'L', '1730', '2134', timber],
    7: [glass, 'Level 1', '106A', 'R', '', '', curtain],
    8: [glass, 'Level 1', '106B', 'R', '', '', curtain],
    9: [entrance, 'Level 1', '201B', 'R', '', '', curtain],
    10: [flush, 'Level 1', '103', 'R', '800', '2100', timber],
    11: [flush, 'Level 1', '104', 'R', '800', '2100', 'Basic Wall: Interior - 165 Partition (1-hr)'],
    12: [entrance, 'Level 1', '201A', 'L', '', '', curtain],
    13: ['Level 1: 7'],
    14: [],
    15: ['Level 2'],
    16: [pocket, 'Level 2', '208B', 'L', '945', '2027', partition],
    17: [pocket, 'Level 2', '208A', 'R', '945', '2027', partition],
    18: [pocket, 'Level 2', '207', 'R', '945', '2027', partition],
    19: [flush, 'Level 2', '203', 'R', '800', '2100', partition],
    20: [flush, 'Level 2', '204', 'L', '800', '2100', partition],
    21: [flush, 'Level 2', '202', 'R', '800', '2100', partition],
    22: [flush, 'Level 2', '206A', 'L', '800', '2100', partition],
    23: [glass, 'Level 2', '206B', 'R', '', '', curtain],
    24: [flush, 'Level 2', '205', 'R', '800', '2100', partition],
    25: ['Level 2: 9'],
    26: ['Total: 16'],
  };

  document.getElementById('letters').innerHTML = letters.map((l, i) =>
    `<th class="h-[17px] border-r border-b border-[#a0a0a0] p-0 pt-px font-normal ${i > 2 && i < 10 ? 'bg-[#adadad]' : 'bg-[#f0f0f0]'}">${l}</th>`).join('');

  let html = '';
  for (let r = 1; r <= 32; r++) {
    const values = data[r];
    const height = r === 4 ? 'h-[23px]' : [3, 11, 18, 25].includes(r) ? 'h-[16px]' : 'h-[17px]';
    html += `<tr class="${height}"><th class="border-r border-b border-[#a0a0a0] p-0 pt-[2px] font-normal ${values ? 'bg-[#adadad]' : 'bg-[#f0f0f0]'}">${r > 3 ? r : ''}</th>`;
    for (let c = 1; c < 13; c++) {
      const inside = values && c > 2 && c < 10;
      const text = inside ? values[c - 3] || '' : '';
      let cls = 'border-r border-b p-0 whitespace-nowrap ';
      if (!inside) cls += 'border-[#d6d6d6]';
      else if (r === 4) cls += 'pt-[2px] pl-[2px] text-left font-["Lato",sans-serif] text-[16px] leading-[20px] font-bold ' + (c === 3 ? 'border-[#d6d6d6] bg-white text-[#284b80]' : 'border-[#8cb0d2] bg-[#a5c7e5] text-[#2b5a9c]');
      else {
        cls += 'border-[#8cb0d2] bg-[#a5c7e5] px-[2px] font-["Noto_Sans",sans-serif] ';
        if (r === 26) cls += 'text-[12px] leading-[14px] font-bold text-[#2b5a9c]';
        else if (values.length < 2) cls += 'pt-px text-[11px] leading-[14px] font-bold text-[#30506f]';
        else cls += 'pt-px text-[11px] leading-[14px] text-[#3a5d80]';
        if (c === 7 || c === 8) cls += ' text-right';
      }
      html += `<td class='${cls}'>${text}</td>`;
    }
    html += '</tr>';
  }
  document.getElementById('rows').innerHTML = html;
</script>
</body>
</html>
